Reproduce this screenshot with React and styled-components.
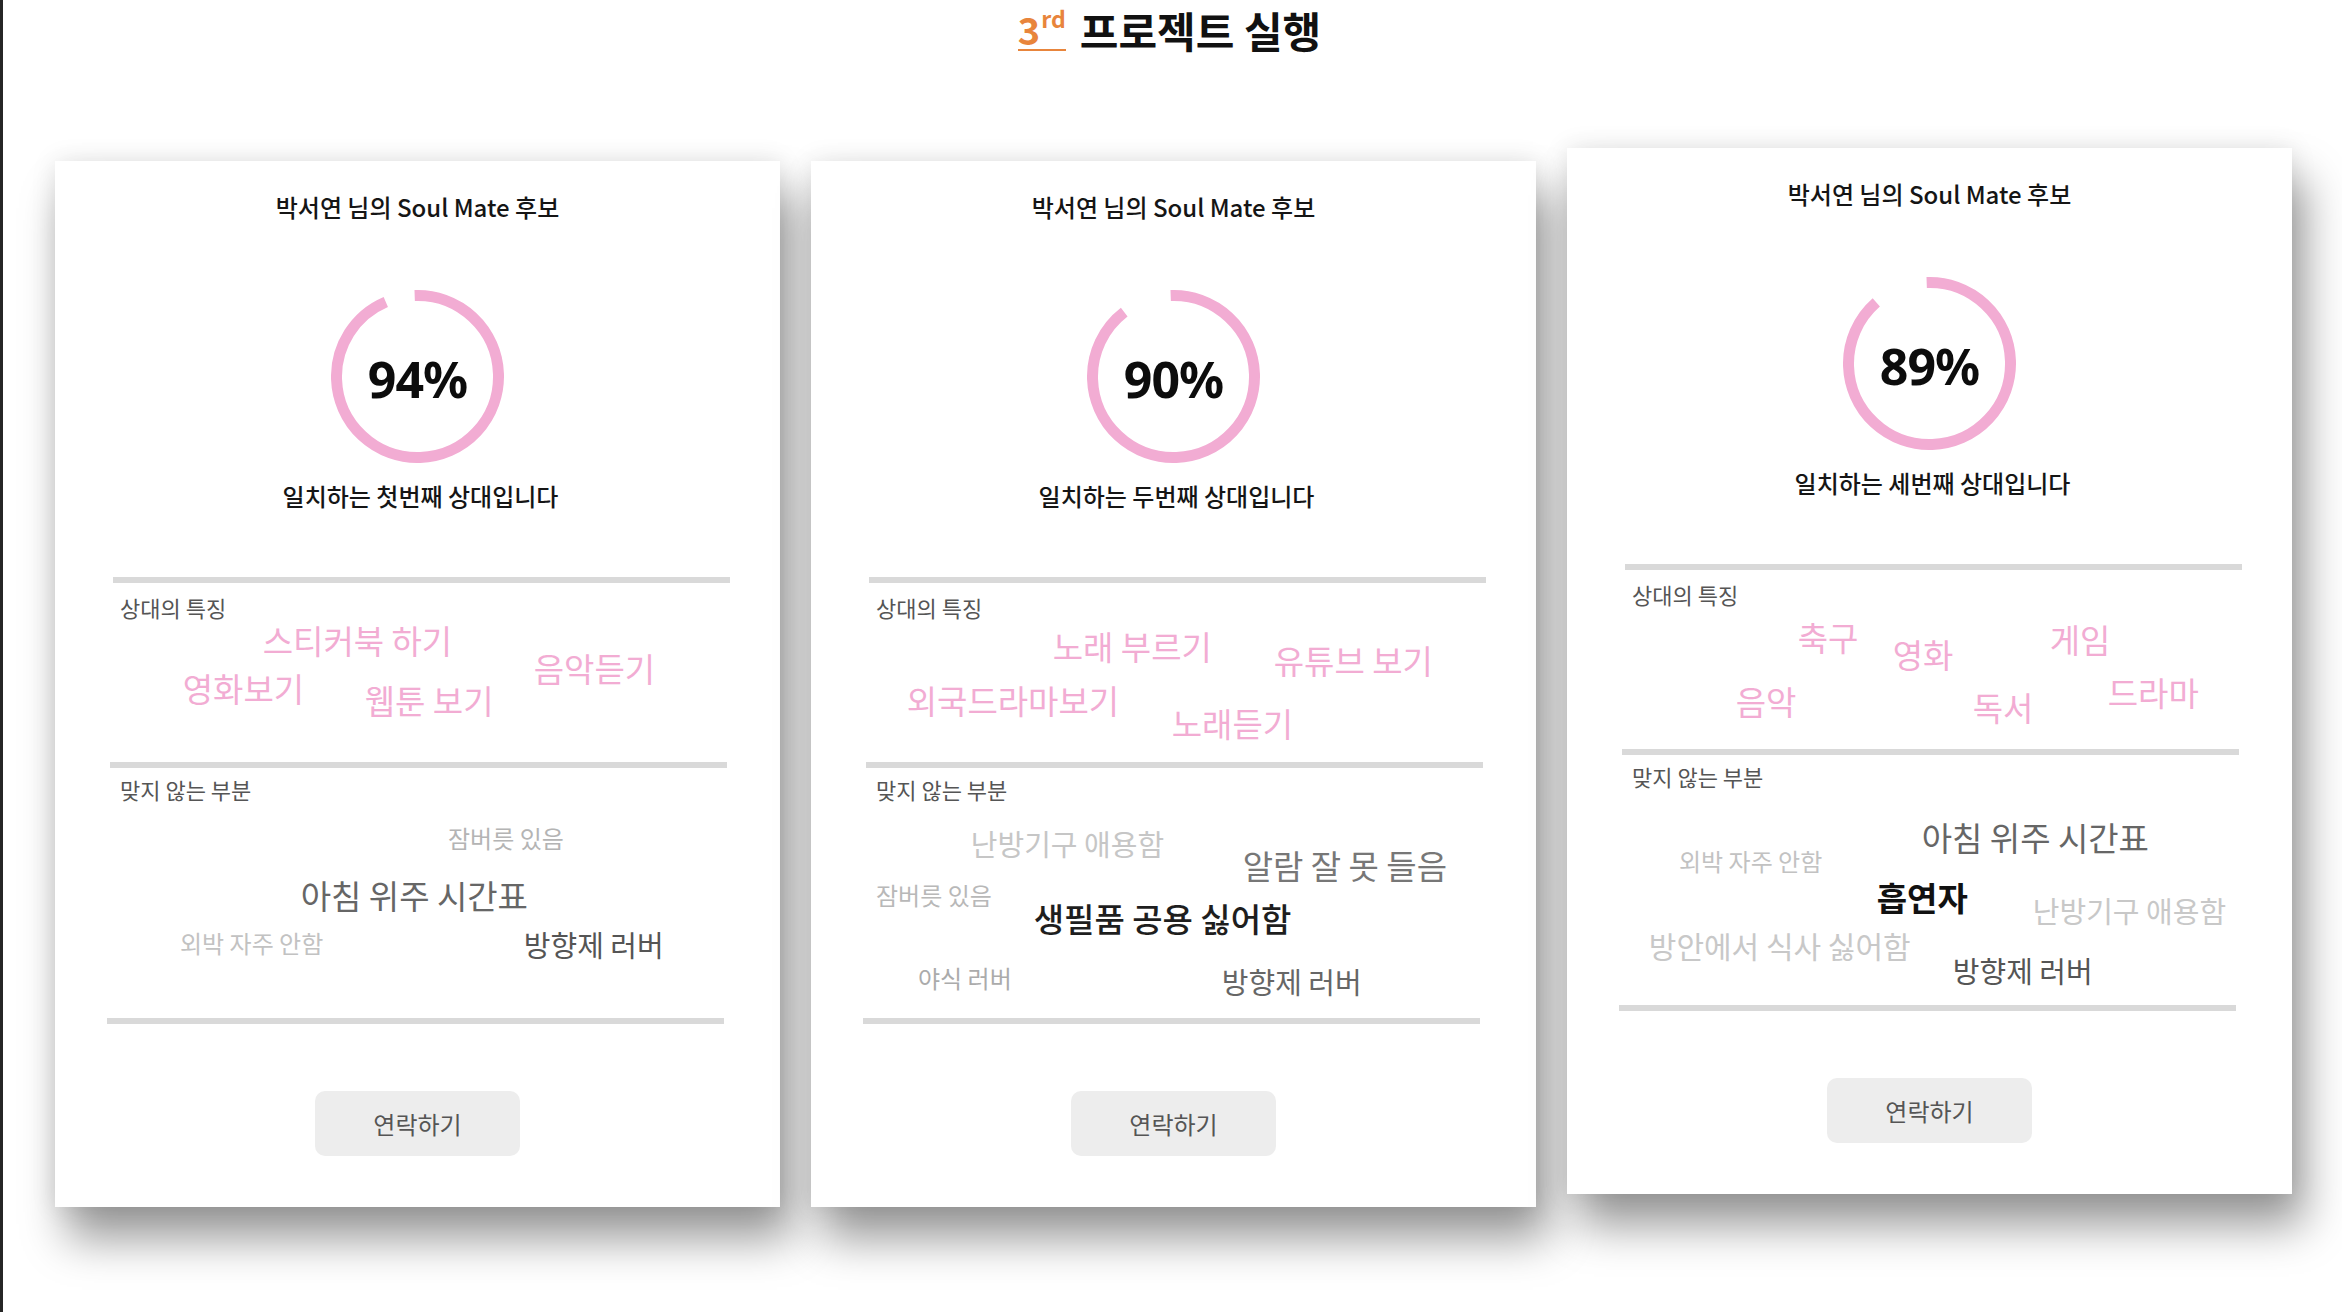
import styled, { createGlobalStyle } from "styled-components";

const GlobalStyle = createGlobalStyle`
  html, body {
    margin: 0;
    padding: 0;
    background: #ffffff;
  }
  body {
    font-family: "Noto Sans CJK KR", "Noto Sans", sans-serif;
    color: #111;
  }
`;

const PINK = "#f2acd3";
const ORANGE = "#e8853c";

const cards = [
  {
    order: "첫번째",
    pct: 94,
    raised: false,
    likes: [
      { t: "스티커북 하기", x: 209, y: 50 },
      { t: "음악듣기", x: 480, y: 78 },
      { t: "영화보기", x: 129, y: 98 },
      { t: "웹툰 보기", x: 311, y: 110 },
    ],
    dislikes: [
      { t: "잠버릇 있음", x: 394, y: 66, s: 24, c: "#b4b4b4" },
      { t: "아침 위주 시간표", x: 247, y: 120, s: 33, c: "#666" },
      { t: "외박 자주 안함", x: 126, y: 171, s: 24, c: "#c2c2c2" },
      { t: "방향제 러버", x: 470, y: 171, s: 29, c: "#555" },
    ],
  },
  {
    order: "두번째",
    pct: 90,
    raised: false,
    likes: [
      { t: "노래 부르기", x: 243, y: 56 },
      { t: "유튜브 보기", x: 464, y: 70 },
      { t: "외국드라마보기", x: 97, y: 110 },
      { t: "노래듣기", x: 362, y: 133 },
    ],
    dislikes: [
      { t: "난방기구 애용함", x: 161, y: 70, s: 29, c: "#c6c6c6" },
      { t: "알람 잘 못 들음", x: 433, y: 90, s: 33, c: "#777" },
      { t: "잠버릇 있음", x: 66, y: 123, s: 24, c: "#b8b8b8" },
      { t: "생필품 공용 싫어함", x: 224, y: 143, s: 33, c: "#1e1e1e", w: 500 },
      { t: "야식 러버", x: 108, y: 206, s: 24, c: "#ababab" },
      { t: "방향제 러버", x: 412, y: 208, s: 29, c: "#666" },
    ],
  },
  {
    order: "세번째",
    pct: 89,
    raised: true,
    likes: [
      { t: "축구", x: 232, y: 60 },
      { t: "영화", x: 327, y: 77 },
      { t: "게임", x: 484, y: 62 },
      { t: "음악", x: 170, y: 124 },
      { t: "독서", x: 407, y: 130 },
      { t: "드라마", x: 542, y: 115 },
    ],
    dislikes: [
      { t: "아침 위주 시간표", x: 356, y: 75, s: 33, c: "#666" },
      { t: "외박 자주 안함", x: 113, y: 102, s: 24, c: "#c2c2c2" },
      { t: "흡연자", x: 311, y: 135, s: 33, c: "#111", w: 700 },
      { t: "난방기구 애용함", x: 467, y: 150, s: 29, c: "#c8c8c8" },
      { t: "방안에서 식사 싫어함", x: 83, y: 184, s: 30, c: "#c8c8c8" },
      { t: "방향제 러버", x: 387, y: 210, s: 29, c: "#555" },
    ],
  },
];

export default function App() {
  return (
    <>
      <GlobalStyle />
      <Page>
        <Header>
          <Ordinal>
            <Three>3</Three>
            <Suffix>rd</Suffix>
          </Ordinal>
          <HeadText>프로젝트 실행</HeadText>
        </Header>
        <CardRow>
          {cards.map((card) => (
            <MateCard key={card.order} card={card} />
          ))}
        </CardRow>
      </Page>
    </>
  );
}

const MateCard = ({ card }) => {
  return (
    <Card $raised={card.raised}>
      <CardTitle>박서연 님의 Soul Mate 후보</CardTitle>
      <Ring pct={card.pct} />
      <SubTitle>일치하는 {card.order} 상대입니다</SubTitle>

      <Section $height={185} $gap={67}>
        <Divider $inset={58} />
        <Label $top={11}>상대의 특징</Label>
        {card.likes.map((w) => (
          <Word key={w.t} $x={w.x} $y={w.y} $size={33} $color={PINK}>
            {w.t}
          </Word>
        ))}
      </Section>

      <Section $height={256} $gap={0}>
        <Divider $inset={55} />
        <Label $top={8}>맞지 않는 부분</Label>
        {card.dislikes.map((w) => (
          <Word
            key={w.t}
            $x={w.x}
            $y={w.y}
            $size={w.s}
            $color={w.c}
            $weight={w.w}
          >
            {w.t}
          </Word>
        ))}
      </Section>

      <Divider $inset={52} />
      <ContactButton>연락하기</ContactButton>
    </Card>
  );
};

const Ring = ({ pct }) => {
  const size = 173;
  const stroke = 11;
  const r = (size - stroke) / 2;
  const len = 2 * Math.PI * r;
  const mid = size / 2;
  return (
    <RingBox>
      <svg width={size} height={size} viewBox={`0 0 ${size} ${size}`}>
        <circle
          cx={mid}
          cy={mid}
          r={r}
          fill="none"
          stroke={PINK}
          strokeWidth={stroke}
          strokeDasharray={`${(len * pct) / 100} ${len}`}
          transform={`rotate(-92 ${mid} ${mid})`}
        />
      </svg>
      <Percent>{pct}%</Percent>
    </RingBox>
  );
};

const Page = styled.main`
  min-height: 1312px;
  border-left: 3px solid #262626;
  box-sizing: border-box;
  overflow: hidden;
`;

const Header = styled.header`
  display: flex;
  justify-content: center;
  align-items: flex-end;
  gap: 14px;
  height: 58px;
  padding-right: 6px;
`;

const Ordinal = styled.span`
  display: inline-flex;
  align-items: flex-start;
  margin-bottom: 7px;
  color: ${ORANGE};
  font-weight: 700;
  line-height: 1;
  padding: 2px 0 1px;
  border-bottom: 2px solid ${ORANGE};
`;

const Three = styled.span`
  font-size: 38px;
`;

const Suffix = styled.span`
  font-size: 23px;
  margin-top: -3px;
  margin-left: 1px;
`;

const HeadText = styled.h1`
  margin: 0;
  font-size: 42px;
  line-height: 1.3;
  font-weight: 700;
  color: #111;
`;

const CardRow = styled.section`
  display: flex;
  align-items: flex-start;
  gap: 31px;
  padding-left: 52px;
  margin-top: 103px;
`;

const Card = styled.article`
  position: relative;
  width: 725px;
  height: 1046px;
  flex-shrink: 0;
  margin-top: ${(p) => (p.$raised ? "-13px" : "0")};
  background: #fff;
  padding-top: 32px;
  box-sizing: border-box;
  display: flex;
  flex-direction: column;
  align-items: center;
  box-shadow: 12px 32px 42px rgba(0, 0, 0, 0.4),
    0 0 24px rgba(0, 0, 0, 0.1);
`;

const CardTitle = styled.h2`
  margin: 0;
  font-size: 24px;
  line-height: 28px;
  font-weight: 500;
  color: #151515;
`;

const RingBox = styled.div`
  display: grid;
  place-items: center;
  margin-top: 69px;
  width: 173px;
  height: 173px;

  & > * {
    grid-area: 1 / 1;
  }
`;

const Percent = styled.span`
  font-family: "Noto Sans", sans-serif;
  font-size: 50px;
  font-weight: 700;
  line-height: 1;
  letter-spacing: -1px;
  color: #0c0c0c;
  padding-top: 4px;
`;

const SubTitle = styled.p`
  margin: 19px 0 0 6px;
  font-size: 24px;
  line-height: 28px;
  font-weight: 500;
  color: #151515;
`;

const Section = styled.div`
  position: relative;
  align-self: stretch;
  height: ${(p) => p.$height}px;
  margin-top: ${(p) => p.$gap}px;
  flex-shrink: 0;
`;

const Divider = styled.div`
  align-self: flex-start;
  margin-left: ${(p) => p.$inset}px;
  width: 617px;
  height: 6px;
  background: #d9d9d9;
  flex-shrink: 0;
`;

const Label = styled.div`
  margin: ${(p) => p.$top}px 0 0 65px;
  font-size: 22px;
  line-height: 26px;
  color: #555;
`;

const Word = styled.span`
  position: absolute;
  left: ${(p) => p.$x - p.$size * 0.04}px;
  top: ${(p) => p.$y - p.$size * 0.1}px;
  font-size: ${(p) => p.$size}px;
  line-height: 1;
  white-space: nowrap;
  color: ${(p) => p.$color};
  font-weight: ${(p) => p.$weight || 400};
`;

const ContactButton = styled.button`
  margin-top: 67px;
  width: 205px;
  height: 65px;
  border: none;
  border-radius: 10px;
  background: #ededed;
  color: #555;
  font-family: "Noto Sans CJK KR", sans-serif;
  font-size: 24px;
  cursor: pointer;
`;
